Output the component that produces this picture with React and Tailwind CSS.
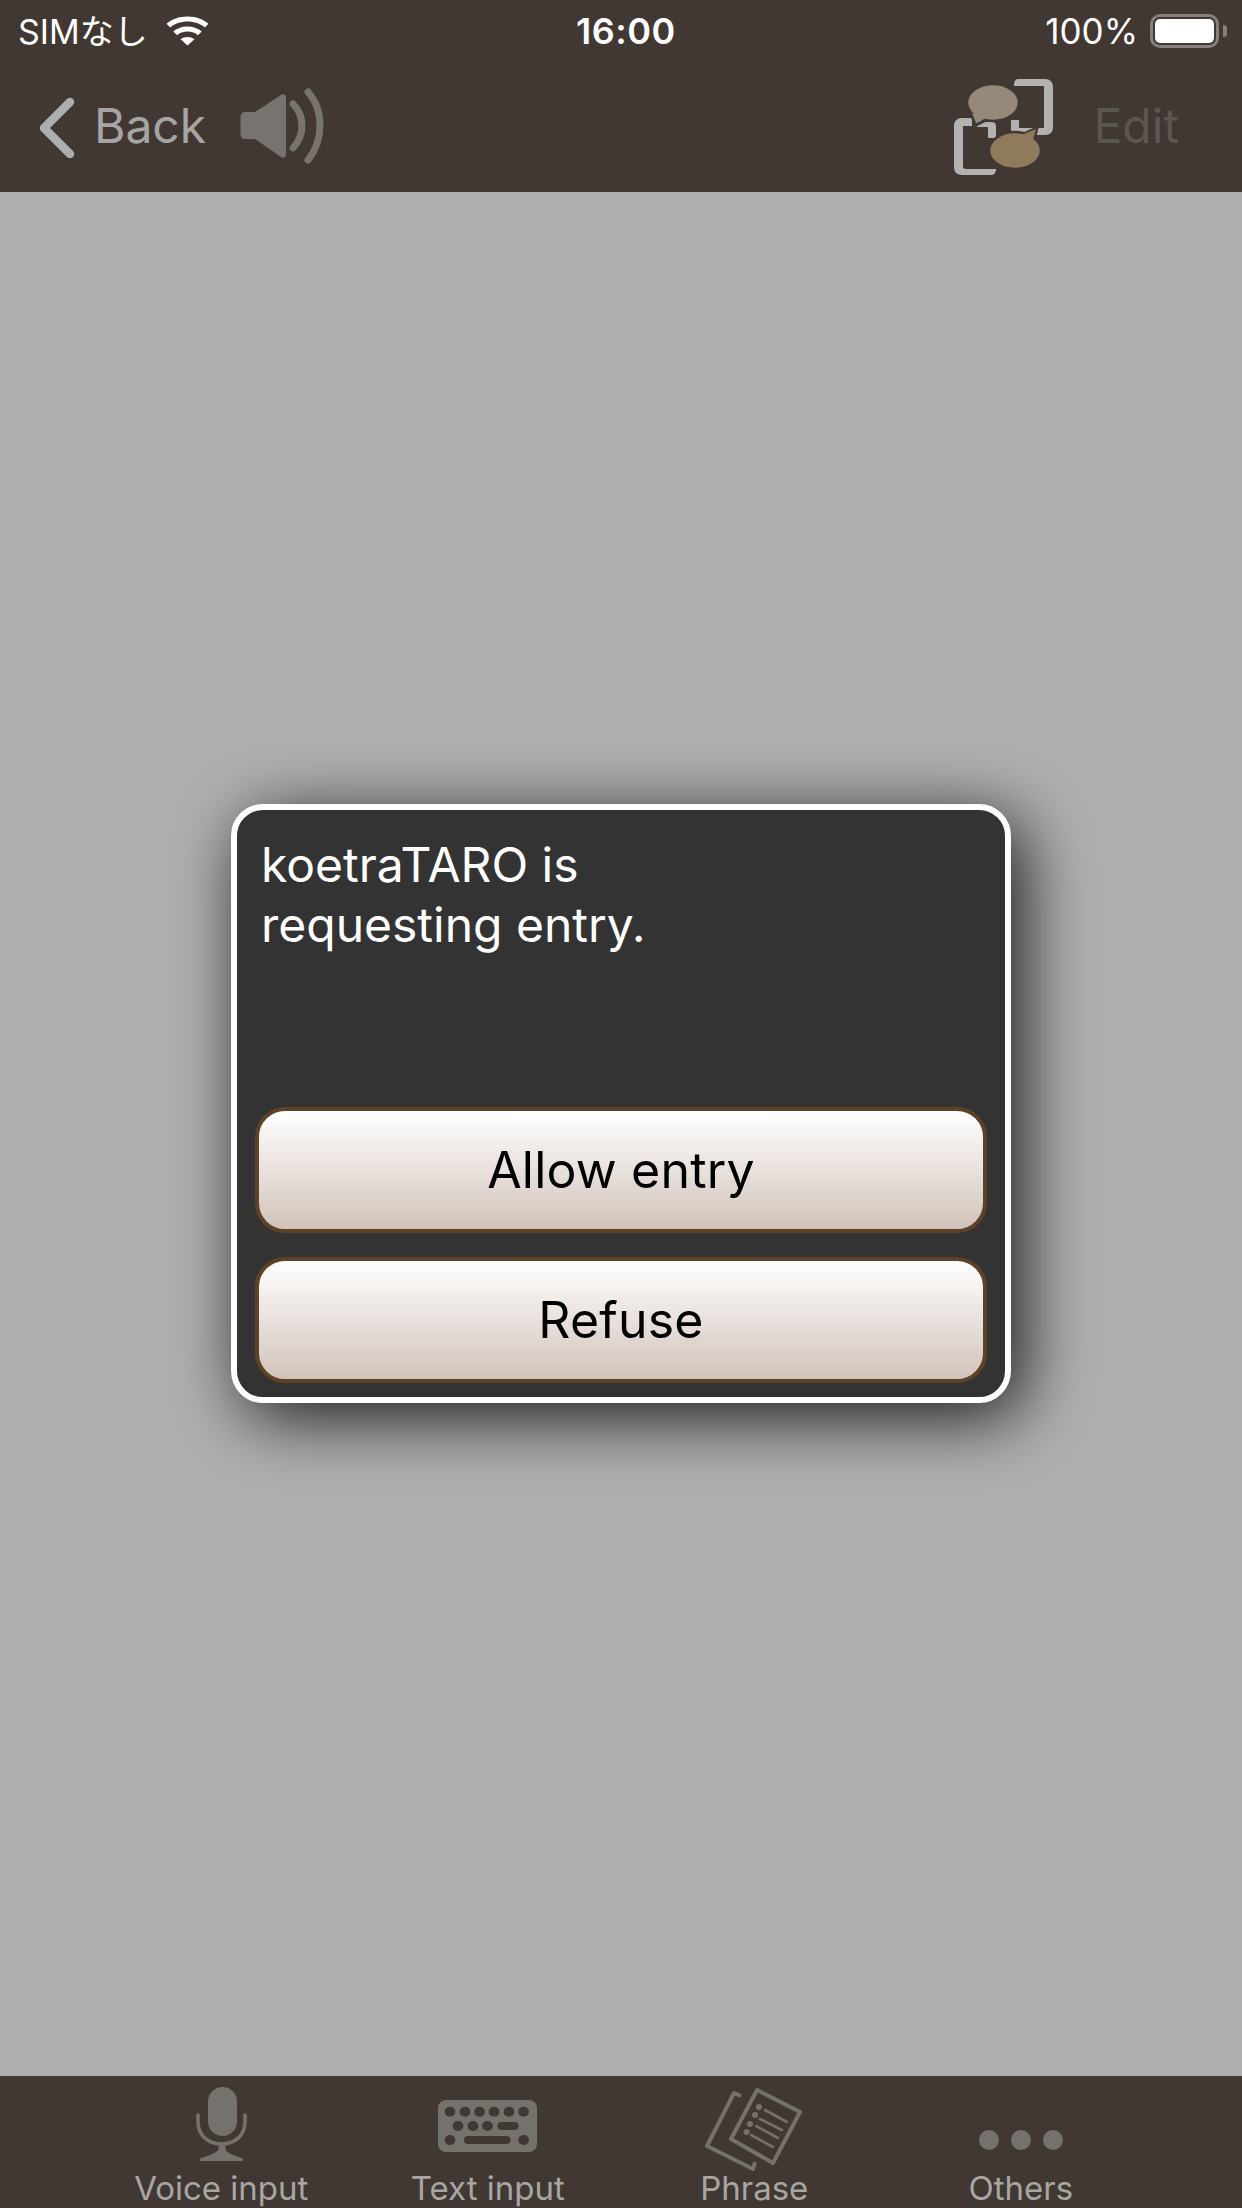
const font = { fontFamily: '"Inter", "Noto Sans CJK JP", sans-serif' };

function Wifi() {
  return (
    <svg width="43" height="30" viewBox="0 0 36 30" preserveAspectRatio="none" className="ml-[18px]">
      <path d="M18 29.5 L12.2 23.2 C15.4 20.4 20.6 20.4 23.8 23.2 Z" fill="#fff" />
      <path d="M18 10.5 C23 10.5 27.2 12.5 30 15.6 L26.6 19.2 C24.6 17 21.4 15.6 18 15.6 C14.6 15.6 11.4 17 9.4 19.2 L6 15.6 C8.8 12.5 13 10.5 18 10.5 Z" fill="#fff" />
      <path d="M18 0.5 C25 0.5 31.4 3.3 35.6 7.7 L32.4 11.4 C29 7.8 23.8 5.6 18 5.6 C12.2 5.6 7 7.8 3.6 11.4 L0.4 7.7 C4.6 3.3 11 0.5 18 0.5 Z" fill="#fff" />
    </svg>
  );
}

function Battery() {
  return (
    <div className="ml-[12px] flex items-center">
      <div className="h-[34px] w-[69px] rounded-[10px] border-[3px] border-[#85807c] p-[2px]">
        <div className="h-full w-full rounded-[5px] bg-white" />
      </div>
      <div className="ml-[4px] h-[12px] w-[4px] rounded-r-[3px] bg-[#85807c]" />
    </div>
  );
}

function Speaker() {
  return (
    <svg width="84" height="76" viewBox="0 0 84 76" className="ml-[34px]">
      <path d="M5 24 H15 L41 7 C44 5 46 7 46 10 V66 C46 69 44 71 41 69 L15 51 H5 C2 51 0.5 49 0.5 46 V29 C0.5 26 2 24 5 24 Z" fill="#77736e" />
      <path d="M53 16 C65 28 65 47 53 60" fill="none" stroke="#77736e" strokeWidth="7" strokeLinecap="round" />
      <path d="M68 4 C84 22 84 52 68 72" fill="none" stroke="#77736e" strokeWidth="7" strokeLinecap="round" />
    </svg>
  );
}

function Exchange() {
  return (
    <svg width="100" height="97" viewBox="0 0 100 97">
      <path d="M64 1 H91 C96 1 99 4 99 9 V49 C99 54 96 57 91 57 H64 C59 57 57 55 57 50 V42 H65 V50 H90 V8 H60 C60 4 61 1 64 1 Z" fill="#b3b2b1" />
      <path d="M18 40 H8 C3 40 0 43 0 48 V89 C0 94 3 97 8 97 H37 C40 97 42 95 42 91 H12 C10 91 9 90 9 88 V48 H18 Z" fill="#b3b2b1" />
      <path d="M23 44 H38 C41 44 42 46 42 48 V60 H34 V49 H23 Z" fill="#b3b2b1" />
      <path d="M16 34 L22 47 L36 40 Z" fill="#95897a" stroke="#413733" strokeWidth="3" />
      <ellipse cx="39" cy="24.5" rx="26" ry="18.5" fill="#95897a" stroke="#413733" strokeWidth="2.5" />
      <path d="M18 35 L22 45 L34 39 Z" fill="#95897a" />
      <path d="M65 58 L83 50 L79 65 Z" fill="#8f7a5b" stroke="#413733" strokeWidth="3" />
      <ellipse cx="61" cy="72.5" rx="26" ry="18.5" fill="#8f7a5b" stroke="#413733" strokeWidth="2.5" />
      <path d="M65 58 L82 51 L78 65 Z" fill="#8f7a5b" />
    </svg>
  );
}

function Mic() {
  return (
    <svg width="53" height="74" viewBox="0 0 53 74">
      <rect x="13" y="0" width="29" height="49" rx="14.5" fill="#75716c" />
      <path d="M3 28 V35 C3 48 13 57 26.5 57 C40 57 50 48 50 35 V28" fill="none" stroke="#75716c" strokeWidth="3.6" strokeLinecap="round" />
      <path d="M23.5 56 H30.5 V62 C31 66 40 69 47 71 C49 72 48.5 74 46.5 74 H6.5 C4.5 74 4 72 6 71 C13 69 22.5 66 23.5 62 Z" fill="#75716c" />
    </svg>
  );
}

function Keyboard() {
  const r1 = [12, 27, 41.6, 56, 71, 85.6];
  const r2 = [20, 35, 49.5];
  return (
    <svg width="99" height="52" viewBox="0 0 99 52">
      <rect x="0" y="0" width="99" height="52" rx="8" fill="#75716c" />
      {r1.map((x) => <ellipse key={x} cx={x} cy="11.7" rx="5.4" ry="5" fill="#413733" />)}
      {r2.map((x) => <ellipse key={x} cx={x} cy="26" rx="5.4" ry="5" fill="#413733" />)}
      <rect x="59.5" y="22" width="21" height="8" rx="4" fill="#413733" />
      <ellipse cx="12" cy="40" rx="5.4" ry="5" fill="#413733" />
      <ellipse cx="85.6" cy="40" rx="5.4" ry="5" fill="#413733" />
      <rect x="26" y="36" width="46.5" height="8" rx="4" fill="#413733" />
    </svg>
  );
}

function PhraseIcon() {
  return (
    <svg width="98" height="84" viewBox="0 0 98 84">
      <path d="M52 3 L95 25 L68 76 L26 52 Z" fill="none" stroke="#75716c" strokeWidth="4" strokeLinejoin="round" />
      <path d="M36 9 L29 6 L2 59 L48 82 L50 75" fill="none" stroke="#75716c" strokeWidth="4" strokeLinejoin="round" />
      <g fill="#75716c">
        <circle cx="54" cy="20" r="3" /><circle cx="50" cy="28" r="3" /><circle cx="45" cy="37" r="3" /><circle cx="41.6" cy="45" r="3" />
      </g>
      <g stroke="#75716c" strokeWidth="2.6" fill="none" strokeLinecap="round">
        <path d="M60 23 L82 35" /><path d="M55 32 L77 43" /><path d="M51 39 L73 51" /><path d="M46 48 L68 60" />
      </g>
    </svg>
  );
}

function Dots() {
  return (
    <div className="flex gap-[12px]">
      <div className="h-[20px] w-[20px] rounded-full bg-[#75716c]" />
      <div className="h-[20px] w-[20px] rounded-full bg-[#75716c]" />
      <div className="h-[20px] w-[20px] rounded-full bg-[#75716c]" />
    </div>
  );
}

function Tab({ icon, label, offset }) {
  return (
    <div className="flex flex-col items-center">
      <div className={`h-[82px] ${offset}`}>{icon}</div>
      <div className="whitespace-nowrap text-[33px] leading-[38px] text-[#a8a6a3]">{label}</div>
    </div>
  );
}

function DialogButton({ children }) {
  return (
    <div className="flex h-[126px] items-center justify-center rounded-[30px] border-[4px] border-[#5e4227] bg-gradient-to-b from-[#ffffff] via-[#e9e1dd] to-[#d1c3ba] text-[50px] leading-none tracking-[0.2px] text-black">
      {children}
    </div>
  );
}

export default function App() {
  return (
    <div className="flex h-[2208px] w-[1242px] flex-col overflow-hidden bg-[#b0b0b0]" style={font}>
      <header className="h-[192px] shrink-0 bg-[#413733]">
        <div className="relative flex h-[60px] items-center justify-between pl-[18px] pr-[15px] pt-[1px] text-[34px] leading-none text-white">
          <div className="flex items-center">
            <span className="translate-y-[1px]">SIMなし</span>
            <Wifi />
          </div>
          <div className="absolute left-[576px] top-[13px] text-[36px] font-semibold tracking-[0.5px]">16:00</div>
          <div className="flex items-center">
            <span className="translate-y-[1px] text-[35px]">100%</span>
            <Battery />
          </div>
        </div>
        <div className="flex h-[132px] items-center justify-between pl-[38px] pr-[63px]">
          <div className="flex items-center">
            <svg width="37" height="64" viewBox="0 0 37 64" className="mr-[19px]">
              <path d="M32 8 L6 34 L32 60" fill="none" stroke="#adadad" strokeWidth="8.5" strokeLinecap="round" strokeLinejoin="round" />
            </svg>
            <span className="text-[48px] leading-none text-[#a6a5a4]">Back</span>
            <Speaker />
          </div>
          <div className="flex items-center">
            <Exchange />
            <span className="ml-[39px] text-[48px] leading-none text-[#5a5651]">Edit</span>
          </div>
        </div>
      </header>

      <main className="flex flex-1 items-center justify-center pb-[61px]">
        <div className="flex h-[599px] w-[780px] flex-col rounded-[32px] border-[6px] border-white bg-[#333333] px-[18px] pb-[14px] pt-[25px] shadow-[12px_14px_70px_rgba(0,0,0,0.85)]">
          <p className="flex-1 pl-[6px] text-[48px] leading-[60px] text-white">
            koetraTARO is<br />requesting entry.
          </p>
          <div className="flex flex-col gap-[24px]">
            <DialogButton>Allow entry</DialogButton>
            <DialogButton>Refuse</DialogButton>
          </div>
        </div>
      </main>

      <footer className="grid h-[132px] shrink-0 grid-cols-4 bg-[#413733] px-[88px] pt-[11px]">
        <Tab icon={<Mic />} label="Voice input" offset="pt-0" />
        <Tab icon={<Keyboard />} label="Text input" offset="pt-[13px]" />
        <Tab icon={<PhraseIcon />} label="Phrase" offset="pt-0" />
        <Tab icon={<Dots />} label="Others" offset="pt-[43px]" />
      </footer>
    </div>
  );
}
